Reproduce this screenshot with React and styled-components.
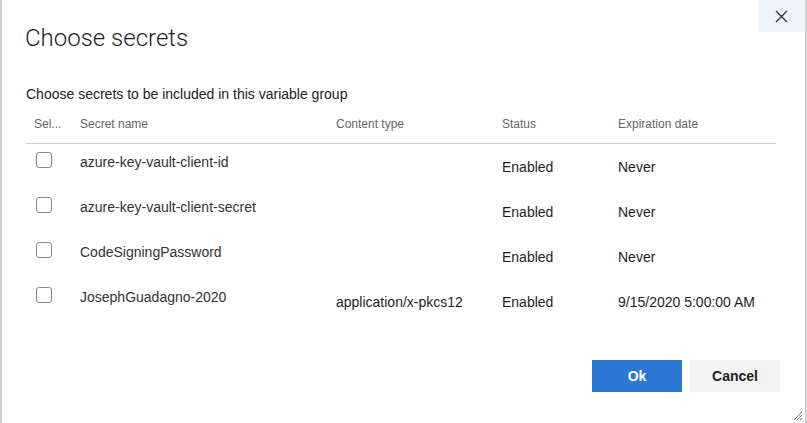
import React from "react";
import styled, { createGlobalStyle } from "styled-components";

const GlobalStyle = createGlobalStyle`
  html, body {
    margin: 0;
    padding: 0;
    background: #fff;
  }
  body {
    font-family: "Liberation Sans", Arial, sans-serif;
    color: #222;
  }
`;

const Dialog = styled.div`
  box-sizing: border-box;
  height: 423px;
  border-left: 2px solid #d0d0d0;
  border-right: 2px solid #d0d0d0;
  display: flex;
  flex-direction: column;
  position: relative;
`;

const Header = styled.div`
  display: flex;
  justify-content: space-between;
  align-items: flex-start;
`;

const Title = styled.h1`
  margin: 24px 0 0 23px;
  font-family: Roboto, "Liberation Sans", sans-serif;
  font-weight: 300;
  font-size: 24px;
  line-height: 28px;
  color: #1e1e1e;
`;

const CloseButton = styled.button`
  width: 47px;
  height: 32px;
  border: none;
  padding: 0;
  background: #eef4fb;
  display: flex;
  align-items: center;
  justify-content: center;
  cursor: pointer;
`;

const Body = styled.div`
  padding: 0 29px 0 24px;
`;

const Subtitle = styled.p`
  margin: 34px 0 0 0;
  font-size: 14px;
  line-height: 16px;
  color: #222;
`;

const Row = styled.div`
  display: grid;
  grid-template-columns: 46px 256px 166px 116px 1fr;
  box-sizing: border-box;
  height: ${(p) => (p.$head ? "27px" : "45px")};
  margin-top: ${(p) => (p.$head ? "15px" : "0")};
  border-bottom: ${(p) => (p.$head ? "1px solid #cdcdcd" : "none")};
`;

const HeadCell = styled.div`
  padding-left: 8px;
  font-size: 12px;
  line-height: 14px;
  color: #666;
  white-space: nowrap;
`;

const Cell = styled.div`
  padding-left: 8px;
  padding-top: ${(p) => (p.$low ? "15px" : "10px")};
  font-size: 14px;
  line-height: 16px;
  color: ${(p) => (p.$low ? "#1e1e1e" : "#333")};
  white-space: nowrap;
`;

const CheckCell = styled.div`
  padding: 8px 0 0 10px;
`;

const Checkbox = styled.span`
  display: block;
  box-sizing: border-box;
  width: 16px;
  height: 16px;
  border: 1px solid #8a8a8a;
  border-radius: 3px;
  background: #fff;
`;

const Footer = styled.div`
  margin-top: auto;
  display: flex;
  justify-content: flex-end;
  gap: 8px;
  padding: 0 25px 31px 0;
`;

const Button = styled.button`
  width: 90px;
  height: 32px;
  border: none;
  padding: 0;
  font-family: "Liberation Sans", Arial, sans-serif;
  font-weight: bold;
  font-size: 14px;
  background: ${(p) => (p.$primary ? "#2b78d4" : "#f3f3f3")};
  color: ${(p) => (p.$primary ? "#fff" : "#1e1e1e")};
  cursor: pointer;
`;

const Grip = styled.svg`
  position: absolute;
  right: 2px;
  bottom: 2px;
`;

const secrets = [
  { name: "azure-key-vault-client-id", type: "", status: "Enabled", expires: "Never" },
  { name: "azure-key-vault-client-secret", type: "", status: "Enabled", expires: "Never" },
  { name: "CodeSigningPassword", type: "", status: "Enabled", expires: "Never" },
  {
    name: "JosephGuadagno-2020",
    type: "application/x-pkcs12",
    status: "Enabled",
    expires: "9/15/2020 5:00:00 AM",
  },
];

export default function App() {
  return (
    <>
      <GlobalStyle />
      <Dialog>
        <Header>
          <Title>Choose secrets</Title>
          <CloseButton aria-label="Close">
            <svg width="13" height="13" viewBox="0 0 13 13">
              <path d="M1 1 L12 12 M12 1 L1 12" stroke="#333" strokeWidth="1.3" />
            </svg>
          </CloseButton>
        </Header>
        <Body>
          <Subtitle>Choose secrets to be included in this variable group</Subtitle>
          <Row $head>
            <HeadCell>Sel...</HeadCell>
            <HeadCell>Secret name</HeadCell>
            <HeadCell>Content type</HeadCell>
            <HeadCell>Status</HeadCell>
            <HeadCell>Expiration date</HeadCell>
          </Row>
          {secrets.map((s) => (
            <Row key={s.name}>
              <CheckCell>
                <Checkbox />
              </CheckCell>
              <Cell>{s.name}</Cell>
              <Cell $low>{s.type}</Cell>
              <Cell $low>{s.status}</Cell>
              <Cell $low>{s.expires}</Cell>
            </Row>
          ))}
        </Body>
        <Footer>
          <Button $primary>Ok</Button>
          <Button>Cancel</Button>
        </Footer>
        <Grip width="11" height="11" viewBox="0 0 11 11">
          <path
            d="M10 2 L2 10 M10 5 L5 10 M10 8 L8 10"
            stroke="#777"
            strokeWidth="1"
          />
        </Grip>
      </Dialog>
    </>
  );
}
